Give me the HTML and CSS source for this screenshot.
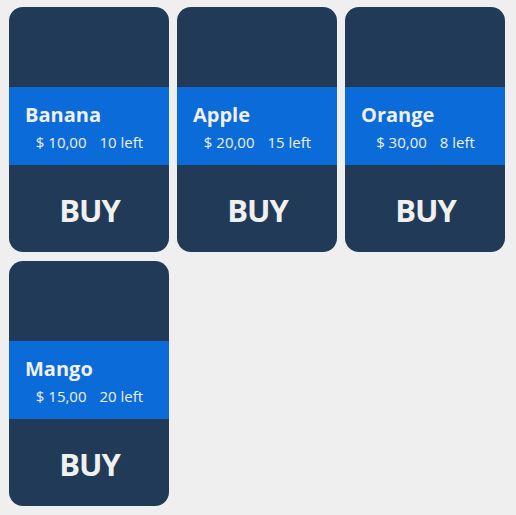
FILE: index.html
```html
<!DOCTYPE html>
<html>
<head>
<meta charset="utf-8">
<link rel="stylesheet" href="styles.css">
</head>
<body>
<div class="grid">
  <div class="card">
    <div class="top"></div>
    <div class="info">
      <div class="name">Banana</div>
      <div class="meta"><span>$ 10,00</span><span>10 left</span></div>
    </div>
    <div class="buy">BUY</div>
  </div>
  <div class="card">
    <div class="top"></div>
    <div class="info">
      <div class="name">Apple</div>
      <div class="meta"><span>$ 20,00</span><span>15 left</span></div>
    </div>
    <div class="buy">BUY</div>
  </div>
  <div class="card">
    <div class="top"></div>
    <div class="info">
      <div class="name">Orange</div>
      <div class="meta"><span>$ 30,00</span><span>8 left</span></div>
    </div>
    <div class="buy">BUY</div>
  </div>
  <div class="card">
    <div class="top"></div>
    <div class="info">
      <div class="name">Mango</div>
      <div class="meta"><span>$ 15,00</span><span>20 left</span></div>
    </div>
    <div class="buy">BUY</div>
  </div>
</div>
</body>
</html>
```
FILE: styles.css
```css
html, body {
  margin: 0;
  background: #efefef;
}
body {
  font-family: "Open Sans", "DejaVu Sans", sans-serif;
  color: #f0f0f0;
}
.grid {
  display: grid;
  grid-template-columns: repeat(3, 160px);
  gap: 9px 8px;
  padding: 7px 0 0 9px;
}
.card {
  width: 160px;
  height: 245px;
  background: #203a58;
  border-radius: 14px;
  overflow: hidden;
  display: flex;
  flex-direction: column;
}
.top {
  height: 80px;
}
.info {
  height: 78px;
  background: #0b6bd9;
  box-sizing: border-box;
}
.name {
  font-size: 20px;
  font-weight: 700;
  line-height: 24px;
  padding: 16px 0 0 16px;
}
.meta {
  font-size: 15px;
  font-weight: 500;
  line-height: 18px;
  padding: 6px 0 0 1px;
  display: flex;
  justify-content: center;
  gap: 13px;
}
.buy {
  flex: 1;
  display: flex;
  align-items: center;
  justify-content: center;
  font-size: 31px;
  font-weight: 700;
  letter-spacing: -1px;
  padding-top: 3px;
  padding-left: 1px;
}
```
